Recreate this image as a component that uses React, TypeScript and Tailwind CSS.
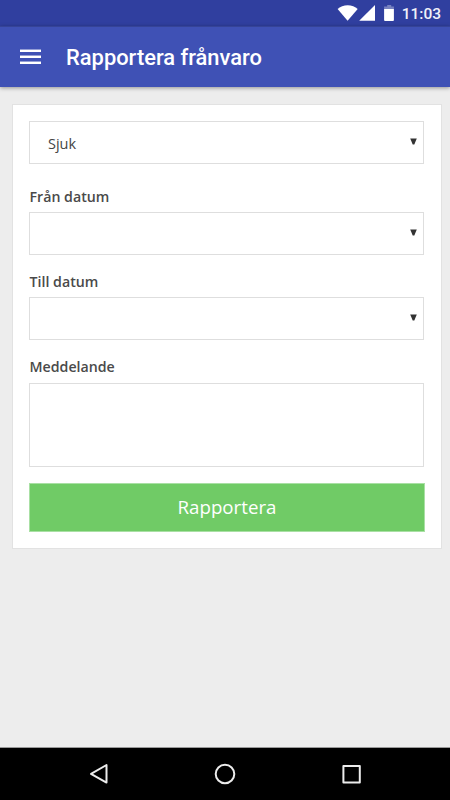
import type { ReactNode } from "react";

const FIELD = "w-[395px] border border-[#dedede] bg-white";

export default function App() {
  return (
    <div className="flex h-[800px] w-[450px] flex-col overflow-hidden bg-[#ededed] font-['Open_Sans',sans-serif] text-[#444]">
      <StatusBar />
      <AppBar title="Rapportera frånvaro" />

      <main className="flex-1 pt-[17px] pr-2 pl-3">
        <form className="h-[445px] border border-[#e2e2e2] bg-white px-4 pt-4">
          <SelectBox value="Sjuk" />
          <Label className="mt-[21px] h-[27px]">Från datum</Label>
          <SelectBox />
          <Label className="mt-[15px] h-[27px]">Till datum</Label>
          <SelectBox />
          <Label className="mt-[15px] h-7">Meddelande</Label>
          <textarea
            aria-label="Meddelande"
            className={`${FIELD} block h-[84px] resize-none outline-none`}
          />
          <button
            type="button"
            className="mt-4 block h-[49px] w-[396px] border border-[#a9e0a4] bg-[#70cb66] pb-[1px] text-[18.7px] leading-[46px] text-white"
          >
            Rapportera
          </button>
        </form>
      </main>

      <NavBar />
    </div>
  );
}

function StatusBar() {
  return (
    <header className="flex h-[26px] shrink-0 items-center justify-end bg-[#303f9f] pr-[9px]">
      <svg width="58" height="26" viewBox="0 0 58 26" fill="#fff" className="mr-[7px]">
        {/* wifi */}
        <path d="M0.6 9.1C5.5 4 15.9 4 20.7 9.1L10.6 20.8Z" />
        {/* cell signal */}
        <path d="M38 5V20.8H22.2Z" />
        {/* battery */}
        <path d="M50.2 5h4v1.5h2.7V9H47.1V6.5h3.1Z" fillOpacity="0.35" />
        <path d="M47.1 9h9.8v11.1q0 .9-.9.9h-8q-.9 0-.9-.9Z" />
      </svg>
      <span className="pt-[2px] font-[Roboto,sans-serif] text-[15.5px] leading-6 font-medium text-[#f0f1f9]">
        11:03
      </span>
    </header>
  );
}

function AppBar({ title }: { title: string }) {
  return (
    <div className="z-10 flex h-[61px] shrink-0 items-center border-t border-[#364497] bg-[#3f51b5] pl-5 shadow-[0_1px_4px_rgba(0,0,0,0.38)]">
      <button type="button" aria-label="Meny" className="mb-px flex w-[21px] flex-col gap-[3px]">
        <span className="h-[3px] border-t border-white/45 bg-white bg-clip-padding" />
        <span className="h-[3px] border-t border-white/45 bg-white bg-clip-padding" />
        <span className="h-[3px] border-t border-white/45 bg-white bg-clip-padding" />
      </button>
      <h1 className="ml-[25px] pt-[2px] font-[Roboto,sans-serif] text-[21.9px] leading-8 font-medium text-white">
        {title}
      </h1>
    </div>
  );
}

function Label({ children, className }: { children: ReactNode; className: string }) {
  return (
    <p className={`${className} pl-[0.5px] text-[14.2px] leading-6 font-semibold text-[#4a4a4a]`}>
      {children}
    </p>
  );
}

function SelectBox({ value }: { value?: string }) {
  return (
    <div
      className={`${FIELD} flex h-[43px] items-center justify-between pr-[6px] pl-[18px]`}
    >
      <span className="pt-[2px] text-[14.5px] leading-5">{value}</span>
      <svg width="7" height="7" viewBox="0 0 7 7" className="-mt-[2px]" fill="#333">
        <path d="M0.2 0.5H6.8L4.3 6.5H2.7Z" />
      </svg>
    </div>
  );
}

function NavBar() {
  return (
    <footer className="flex h-[53px] shrink-0 items-center border-t border-[#999] bg-black">
      <svg
        width="450"
        height="52"
        viewBox="0 0 450 52"
        fill="none"
        stroke="#ececec"
        strokeWidth="2"
        strokeLinejoin="round"
      >
        <path d="M106.5 17v17.6L91 25.9Z" />
        <circle cx="225" cy="26" r="9.3" />
        <rect x="343.4" y="18" width="16.4" height="16.4" />
      </svg>
    </footer>
  );
}
